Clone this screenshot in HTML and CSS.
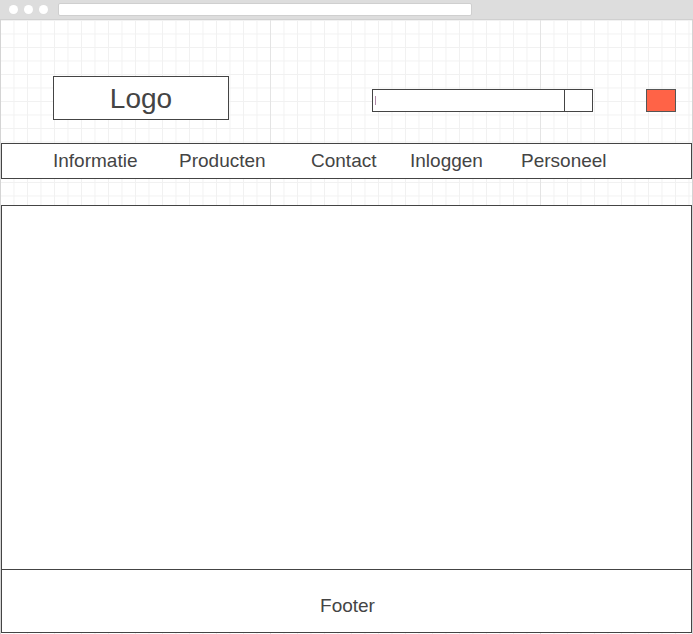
FILE: index.html
```html
<!DOCTYPE html>
<html lang="nl">
<head>
<meta charset="utf-8">
<title>Wireframe</title>
<link rel="stylesheet" href="styles.css">
</head>
<body>
<div class="window">
  <div class="chrome">
    <span class="dot"></span><span class="dot"></span><span class="dot"></span>
    <div class="url"></div>
  </div>
  <div class="page">
    <header class="header">
      <div class="logo">Logo</div>
      <div class="search">
        <div class="search-input"><span class="caret"></span></div>
        <div class="search-btn"></div>
      </div>
      <div class="red-btn"></div>
    </header>
    <nav class="nav">
      <a>Informatie</a>
      <a>Producten</a>
      <a>Contact</a>
      <a>Inloggen</a>
      <a>Personeel</a>
    </nav>
    <main class="main"></main>
    <footer class="footer">Footer</footer>
  </div>
</div>
</body>
</html>
```

FILE: styles.css
```css
html, body {
  margin: 0;
  padding: 0;
  background: #fff;
}
body {
  font-family: "Liberation Sans", Arial, sans-serif;
  color: #444;
}
.window {
  width: 693px;
  height: 634px;
  overflow: hidden;
}
.chrome {
  height: 20px;
  box-sizing: border-box;
  background: #dddddd;
  border-bottom: 1px solid #d0d0d0;
  display: flex;
  align-items: center;
  padding-left: 9px;
}
.dot {
  width: 9px;
  height: 9px;
  border-radius: 50%;
  background: #fff;
  margin-right: 6px;
}
.url {
  margin-left: 4px;
  width: 414px;
  height: 13px;
  box-sizing: border-box;
  background: #fff;
  border: 1px solid #cfcfcf;
  border-radius: 2px;
}
.page {
  height: 614px;
  border-left: 1px solid #d4d4d4;
  border-right: 1px solid #d4d4d4;
  background-color: #fff;
  background-image:
    linear-gradient(to right, #e4e4e4 1px, transparent 1px),
    linear-gradient(to right, #f1f1f1 1px, transparent 1px),
    linear-gradient(to bottom, #f1f1f1 1px, transparent 1px);
  background-size: 270px 100%, 13.5px 13.5px, 13.5px 13.5px;
  background-position: -1px 0, -1px 0, 0 0;
}
.header {
  height: 123px;
  display: flex;
  align-items: flex-start;
}
.logo {
  margin-top: 56px;
  margin-left: 52px;
  width: 176px;
  height: 44px;
  box-sizing: border-box;
  border: 1px solid #444;
  background: #fff;
  display: flex;
  align-items: center;
  justify-content: center;
  padding-top: 2px;
  font-size: 28px;
  color: #444;
}
.search {
  margin-top: 69px;
  margin-left: 143px;
  width: 221px;
  height: 23px;
  box-sizing: border-box;
  border: 1px solid #444;
  background: #fff;
  display: flex;
}
.search-input {
  flex: 1;
  border-right: 1px solid #444;
  display: flex;
  align-items: center;
  padding-left: 2px;
}
.caret {
  width: 1px;
  height: 9px;
  background: #b08aa8;
}
.search-btn {
  width: 27px;
}
.red-btn {
  margin-top: 69px;
  margin-left: 53px;
  width: 30px;
  height: 23px;
  box-sizing: border-box;
  background: #ff6347;
  border: 1px solid #555;
}
.nav {
  height: 36px;
  box-sizing: border-box;
  border: 1px solid #444;
  background: #fff;
  display: grid;
  grid-template-columns: 126px 132px 99px 111px auto;
  align-items: center;
  padding-left: 51px;
  padding-bottom: 2px;
  font-size: 19px;
  color: #444;
}
.nav a {
  line-height: 1;
}
.main {
  margin-top: 26px;
  height: 364px;
  box-sizing: border-box;
  border: 1px solid #444;
  border-bottom: none;
  background: #fff;
}
.footer {
  height: 64px;
  box-sizing: border-box;
  border: 1px solid #444;
  background: #fff;
  display: flex;
  align-items: center;
  justify-content: center;
  padding-top: 10px;
  padding-left: 2px;
  font-size: 19px;
  color: #444;
}
```
